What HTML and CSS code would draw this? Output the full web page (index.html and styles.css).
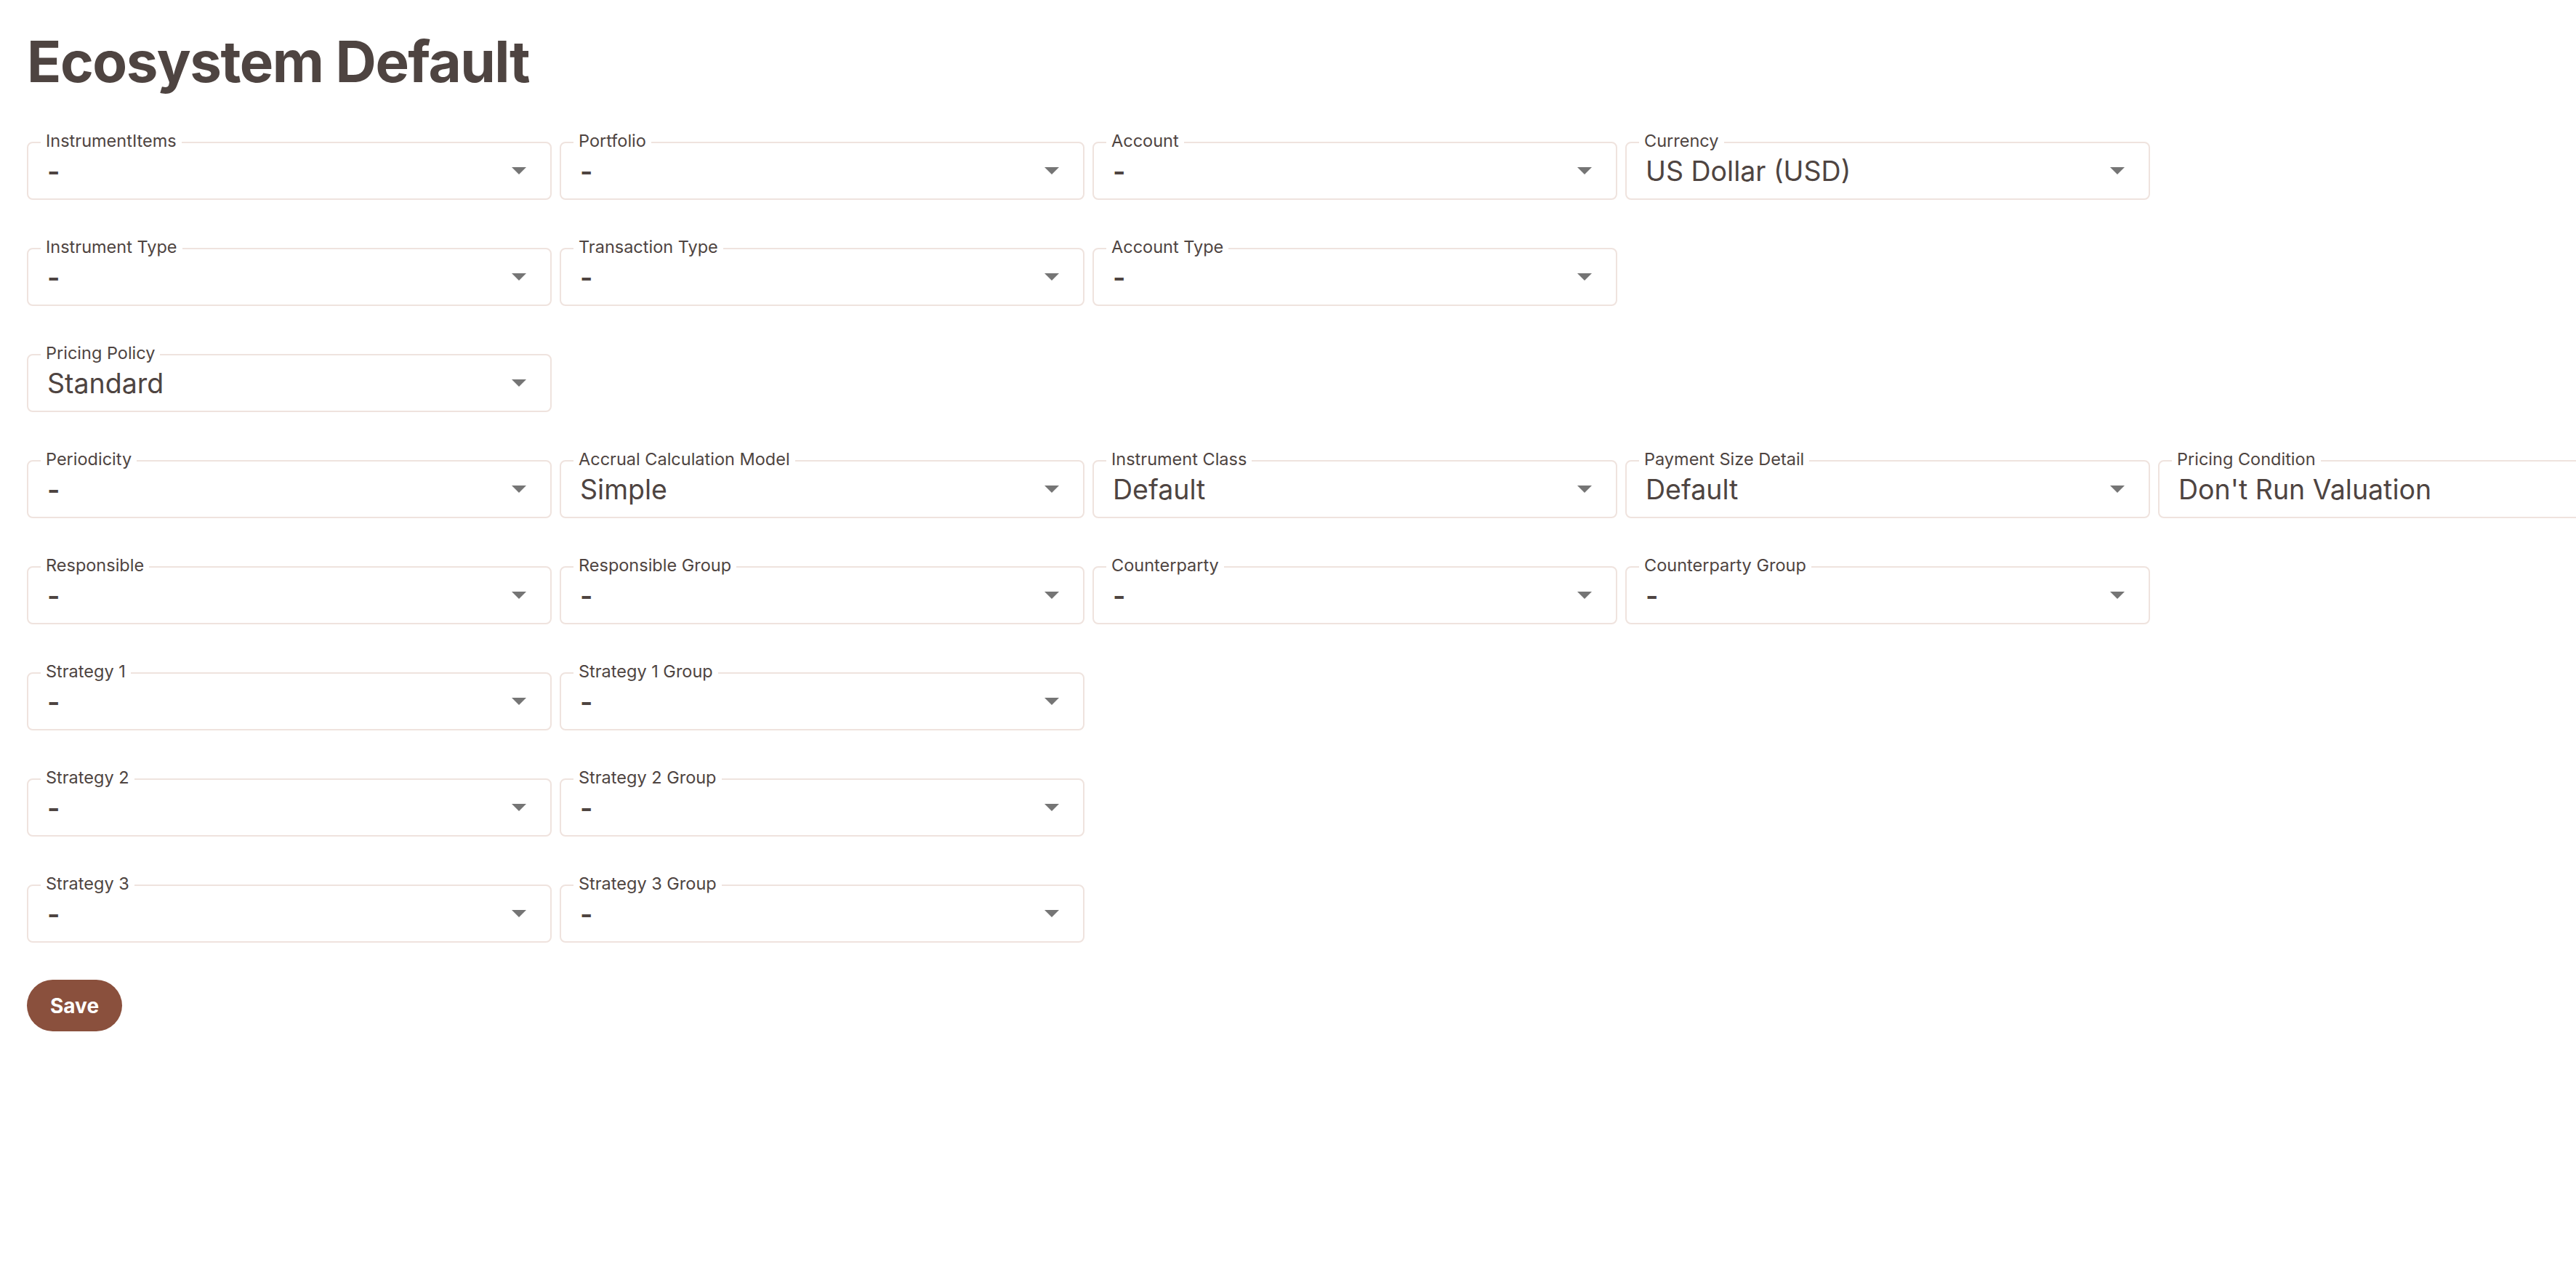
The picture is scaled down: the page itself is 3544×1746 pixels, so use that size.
FILE: index.html
```html
<!DOCTYPE html>
<html lang="en">
<head>
<meta charset="utf-8">
<title>Ecosystem Default</title>
<link rel="stylesheet" href="styles.css">
</head>
<body>
<main class="page">
  <h1 class="title">Ecosystem Default</h1>
  <div class="form">
    <div class="row">
      <div class="field"><span class="label">InstrumentItems</span><span class="value dash">-</span><span class="arrow"></span></div>
      <div class="field"><span class="label">Portfolio</span><span class="value dash">-</span><span class="arrow"></span></div>
      <div class="field"><span class="label">Account</span><span class="value dash">-</span><span class="arrow"></span></div>
      <div class="field"><span class="label">Currency</span><span class="value">US Dollar (USD)</span><span class="arrow"></span></div>
    </div>
    <div class="row">
      <div class="field"><span class="label">Instrument Type</span><span class="value dash">-</span><span class="arrow"></span></div>
      <div class="field"><span class="label">Transaction Type</span><span class="value dash">-</span><span class="arrow"></span></div>
      <div class="field"><span class="label">Account Type</span><span class="value dash">-</span><span class="arrow"></span></div>
    </div>
    <div class="row">
      <div class="field"><span class="label">Pricing Policy</span><span class="value">Standard</span><span class="arrow"></span></div>
    </div>
    <div class="row">
      <div class="field"><span class="label">Periodicity</span><span class="value dash">-</span><span class="arrow"></span></div>
      <div class="field"><span class="label">Accrual Calculation Model</span><span class="value">Simple</span><span class="arrow"></span></div>
      <div class="field"><span class="label">Instrument Class</span><span class="value">Default</span><span class="arrow"></span></div>
      <div class="field"><span class="label">Payment Size Detail</span><span class="value">Default</span><span class="arrow"></span></div>
      <div class="field"><span class="label">Pricing Condition</span><span class="value">Don't Run Valuation</span><span class="arrow"></span></div>
    </div>
    <div class="row">
      <div class="field"><span class="label">Responsible</span><span class="value dash">-</span><span class="arrow"></span></div>
      <div class="field"><span class="label">Responsible Group</span><span class="value dash">-</span><span class="arrow"></span></div>
      <div class="field"><span class="label">Counterparty</span><span class="value dash">-</span><span class="arrow"></span></div>
      <div class="field"><span class="label">Counterparty Group</span><span class="value dash">-</span><span class="arrow"></span></div>
    </div>
    <div class="row">
      <div class="field"><span class="label">Strategy 1</span><span class="value dash">-</span><span class="arrow"></span></div>
      <div class="field"><span class="label">Strategy 1 Group</span><span class="value dash">-</span><span class="arrow"></span></div>
    </div>
    <div class="row">
      <div class="field"><span class="label">Strategy 2</span><span class="value dash">-</span><span class="arrow"></span></div>
      <div class="field"><span class="label">Strategy 2 Group</span><span class="value dash">-</span><span class="arrow"></span></div>
    </div>
    <div class="row">
      <div class="field"><span class="label">Strategy 3</span><span class="value dash">-</span><span class="arrow"></span></div>
      <div class="field"><span class="label">Strategy 3 Group</span><span class="value dash">-</span><span class="arrow"></span></div>
    </div>
  </div>
  <button class="save" type="button">Save</button>
</main>
</body>
</html>
```
FILE: styles.css
```css
html, body {
  margin: 0;
  padding: 0;
  background: #ffffff;
  overflow: hidden;
}

body {
  font-family: Inter, "Noto Sans", "Liberation Sans", sans-serif;
  color: #4e4441;
}

.page {
  padding: 38px 0 0 37px;
  display: flex;
  flex-direction: column;
  align-items: flex-start;
}

.title {
  margin: 0;
  font-size: 78px;
  line-height: 94px;
  font-weight: 700;
  letter-spacing: -0.019em;
  color: #4e4441;
}

.form {
  margin-top: 63px;
  display: flex;
  flex-direction: column;
  gap: 66px;
}

.row {
  display: flex;
  flex-wrap: nowrap;
  gap: 11px;
}

.field {
  position: relative;
  flex: none;
  width: 722px;
  height: 80px;
  box-sizing: border-box;
  border: 2px solid #efe3de;
  border-radius: 8px;
  display: flex;
  align-items: center;
  padding: 0 24px 0 26px;
}

.label {
  position: absolute;
  top: -17px;
  left: 17px;
  padding: 0 7px;
  background: #ffffff;
  font-size: 23.5px;
  line-height: 28px;
  color: #4e4441;
  white-space: nowrap;
}

.value {
  flex: 1;
  font-size: 37.5px;
  line-height: 46px;
  color: #4e4441;
  white-space: nowrap;
  margin-top: 2px;
}

.value.dash {
  font-weight: 600;
}

.arrow {
  flex: none;
  width: 0;
  height: 0;
  border-left: 10px solid transparent;
  border-right: 10px solid transparent;
  border-top: 10px solid #757575;
  margin-right: 9px;
}

.save {
  margin-top: 51px;
  height: 71px;
  padding: 0 32px;
  border: none;
  border-radius: 36px;
  background: #8a503d;
  color: #ffffff;
  font-family: Inter, "Noto Sans", "Liberation Sans", sans-serif;
  font-size: 28px;
  font-weight: 700;
  cursor: pointer;
}
```
